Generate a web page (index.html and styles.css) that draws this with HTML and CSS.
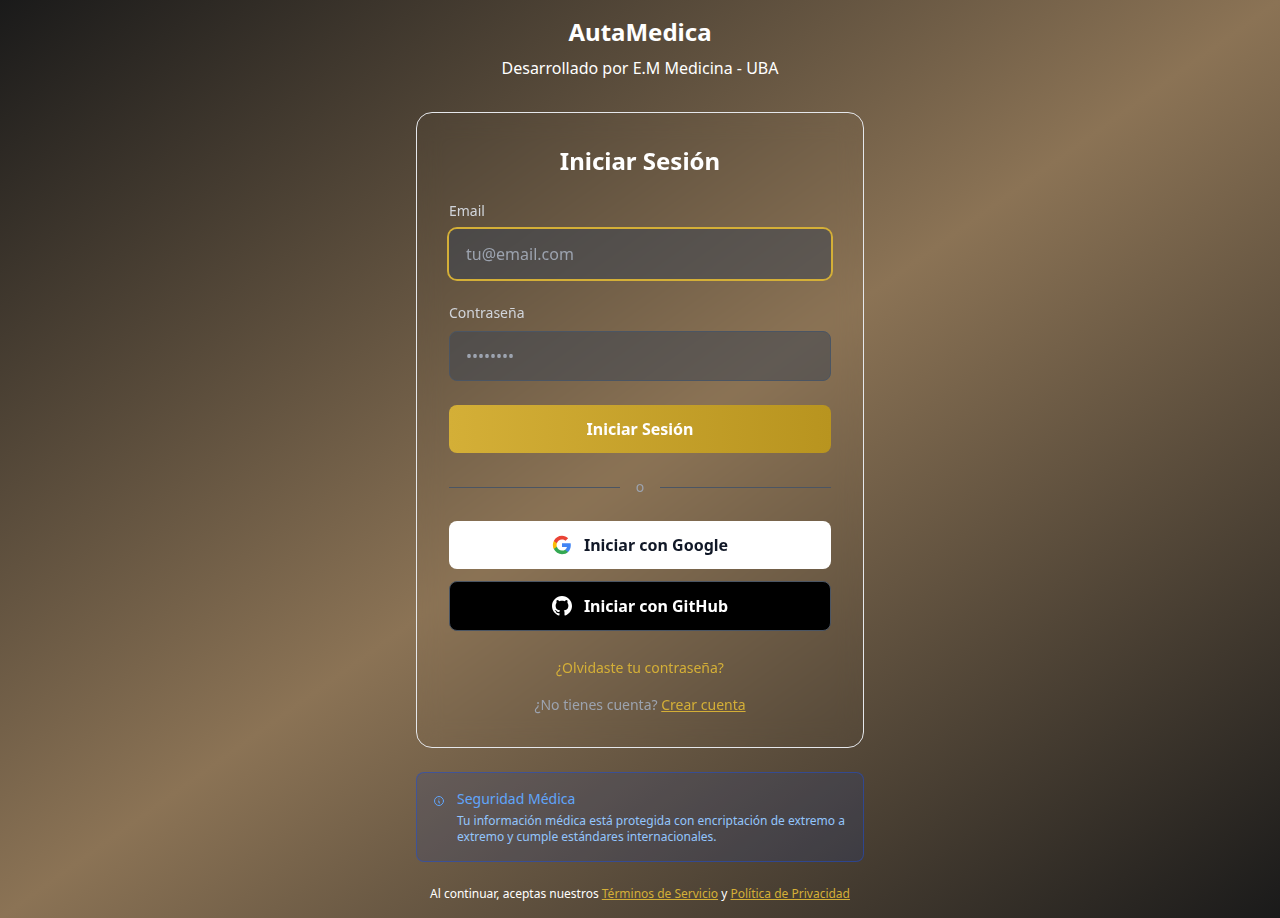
FILE: index.html
```html
<!DOCTYPE html>
<html lang="es">
<head>
<meta charset="utf-8">
<meta name="viewport" content="width=device-width, initial-scale=1">
<title>AutaMedica</title>
<link rel="stylesheet" href="styles.css">
</head>
<body>
<div class="page">
  <div class="column">
    <header class="brand">
      <h1 class="title">AutaMedica</h1>
      <p class="tagline">Desarrollado por E.M Medicina - UBA</p>
    </header>

    <main class="card">
      <h2 class="title card-title">Iniciar Sesión</h2>
      <form class="form">
        <div class="field">
          <label class="label" for="email">Email</label>
          <input class="input input-active" id="email" type="email" placeholder="tu@email.com">
        </div>
        <div class="field">
          <label class="label" for="password">Contraseña</label>
          <input class="input" id="password" type="password" placeholder="••••••••">
        </div>
        <button class="button button-primary" type="submit">Iniciar Sesión</button>
      </form>

      <div class="divider"><span>o</span></div>

      <div class="providers">
        <button class="button button-google" type="button">
          <svg class="provider-icon" viewBox="0 0 24 24" aria-hidden="true">
            <path fill="#4285F4" d="M22.56 12.25c0-.78-.07-1.53-.2-2.25H12v4.26h5.92c-.26 1.37-1.04 2.53-2.21 3.31v2.77h3.57c2.08-1.92 3.28-4.74 3.28-8.09z"/>
            <path fill="#34A853" d="M12 23c2.97 0 5.46-.98 7.28-2.66l-3.57-2.77c-.98.66-2.23 1.06-3.71 1.06-2.86 0-5.29-1.93-6.16-4.53H2.18v2.84C3.99 20.53 7.7 23 12 23z"/>
            <path fill="#FBBC05" d="M5.84 14.09c-.22-.66-.35-1.36-.35-2.09s.13-1.43.35-2.09V7.07H2.18C1.43 8.55 1 10.22 1 12s.43 3.45 1.18 4.93l2.85-2.22.81-.62z"/>
            <path fill="#EA4335" d="M12 5.38c1.62 0 3.06.56 4.21 1.64l3.15-3.15C17.45 2.09 14.97 1 12 1 7.7 1 3.99 3.47 2.18 7.07l3.66 2.84c.87-2.6 3.3-4.53 6.16-4.53z"/>
          </svg>
          Iniciar con Google
        </button>
        <button class="button button-github" type="button">
          <svg class="provider-icon" viewBox="0 0 24 24" fill="currentColor" aria-hidden="true">
            <path d="M12 0c-6.626 0-12 5.373-12 12 0 5.302 3.438 9.8 8.207 11.387.599.111.793-.261.793-.577v-2.234c-3.338.726-4.033-1.416-4.033-1.416-.546-1.387-1.333-1.756-1.333-1.756-1.089-.745.083-.729.083-.729 1.205.084 1.839 1.237 1.839 1.237 1.07 1.834 2.807 1.304 3.492.997.107-.775.418-1.305.762-1.604-2.665-.305-5.467-1.334-5.467-5.931 0-1.311.469-2.381 1.236-3.221-.124-.303-.535-1.524.117-3.176 0 0 1.008-.322 3.301 1.23.957-.266 1.983-.399 3.003-.404 1.02.005 2.047.138 3.006.404 2.291-1.552 3.297-1.23 3.297-1.23.653 1.653.242 2.874.118 3.176.77.84 1.235 1.911 1.235 3.221 0 4.609-2.807 5.624-5.479 5.921.43.372.823 1.102.823 2.222v3.293c0 .319.192.694.801.576 4.765-1.589 8.199-6.086 8.199-11.386 0-6.627-5.373-12-12-12z"/>
          </svg>
          Iniciar con GitHub
        </button>
      </div>

      <div class="account-links">
        <div><a class="link-plain" href="#">¿Olvidaste tu contraseña?</a></div>
        <p class="signup">¿No tienes cuenta? <a class="link" href="#">Crear cuenta</a></p>
      </div>
    </main>

    <aside class="notice">
      <svg class="notice-icon" viewBox="0 0 24 24" fill="none" stroke="currentColor" stroke-width="2" stroke-linecap="round" stroke-linejoin="round" aria-hidden="true">
        <path d="M13 16h-1v-4h-1m1-4h.01M21 12a9 9 0 11-18 0 9 9 0 0118 0z"/>
      </svg>
      <div>
        <h3 class="notice-title">Seguridad Médica</h3>
        <p class="notice-text">Tu información médica está protegida con encriptación de extremo a extremo y cumple estándares internacionales.</p>
      </div>
    </aside>

    <footer class="legal">Al continuar, aceptas nuestros <a class="link" href="#">Términos de Servicio</a> y <a class="link" href="#">Política de Privacidad</a></footer>
  </div>
</div>
</body>
</html>
```
FILE: styles.css
```css
*, *::before, *::after {
  box-sizing: border-box;
}

body, h1, h2, h3, p {
  margin: 0;
}

body {
  font-family: "Noto Sans", sans-serif;
  font-size: 16px;
  line-height: 24px;
  color: #ffffff;
}

.page {
  min-height: 100vh;
  padding: 16px;
  display: flex;
  align-items: center;
  justify-content: center;
  background: linear-gradient(to bottom right, #1a1a1a 0%, #8b7355 50%, #1a1a1a 100%);
}

.column {
  width: 100%;
  max-width: 448px;
}

.brand {
  margin-bottom: 32px;
  text-align: center;
}

.title {
  font-size: 24px;
  line-height: 32px;
  font-weight: 700;
}

.tagline {
  margin-top: 8px;
}

.card {
  padding: 32px;
  border: 1px solid #e5e7eb;
  border-radius: 16px;
  backdrop-filter: blur(12px);
}

.card-title {
  margin-bottom: 24px;
  text-align: center;
}

.form {
  display: flex;
  flex-direction: column;
  gap: 24px;
}

.field {
  display: flex;
  flex-direction: column;
  gap: 8px;
}

.label {
  font-size: 14px;
  line-height: 20px;
  color: #d1d5db;
}

.input {
  width: 100%;
  height: 50px;
  padding: 12px 16px;
  border: 1px solid #4b5563;
  border-radius: 8px;
  background: rgba(55, 65, 81, 0.5);
  font: inherit;
  color: #ffffff;
  outline: none;
}

.input::placeholder {
  color: #9ca3af;
}

.input:focus,
.input-active {
  border-color: transparent;
  box-shadow: 0 0 0 2px #d4af37;
}

.button {
  width: 100%;
  padding: 12px 16px;
  display: flex;
  align-items: center;
  justify-content: center;
  gap: 12px;
  border: 0;
  border-radius: 8px;
  font: inherit;
  font-weight: 700;
  cursor: pointer;
}

.button-primary {
  background: linear-gradient(to right, #d4af37, #b8941f);
  color: #ffffff;
}

.button-google {
  background: #ffffff;
  color: #111827;
}

.button-github {
  border: 1px solid #4b5563;
  background: #000000;
  color: #ffffff;
}

.provider-icon {
  width: 20px;
  height: 20px;
}

.divider {
  margin: 24px 0;
  display: flex;
  align-items: center;
  gap: 16px;
  font-size: 14px;
  line-height: 20px;
  color: #9ca3af;
}

.divider::before,
.divider::after {
  content: "";
  flex: 1;
  border-top: 1px solid #4b5563;
}

.providers {
  display: flex;
  flex-direction: column;
  gap: 12px;
}

.account-links {
  margin-top: 24px;
  display: flex;
  flex-direction: column;
  gap: 16px;
  text-align: center;
}

.link-plain {
  font-size: 14px;
  line-height: 20px;
  color: #d4af37;
  text-decoration: none;
}

.signup {
  font-size: 14px;
  line-height: 20px;
  color: #9ca3af;
}

.link {
  color: #d4af37;
  text-decoration: underline;
}

.notice {
  margin-top: 24px;
  padding: 16px;
  display: flex;
  align-items: flex-start;
  gap: 12px;
  border: 1px solid rgba(29, 78, 216, 0.5);
  border-radius: 8px;
  background: rgba(30, 58, 138, 0.2);
}

.notice-icon {
  flex: none;
  width: 12px;
  height: 20px;
  margin-top: 2px;
  color: #60a5fa;
}

.notice-title {
  margin-bottom: 4px;
  font-size: 14px;
  line-height: 20px;
  font-weight: 400;
  color: #60a5fa;
}

.notice-text {
  font-size: 12px;
  line-height: 16px;
  color: #93c5fd;
}

.legal {
  margin-top: 24px;
  font-size: 12px;
  line-height: 16px;
  text-align: center;
}
```
